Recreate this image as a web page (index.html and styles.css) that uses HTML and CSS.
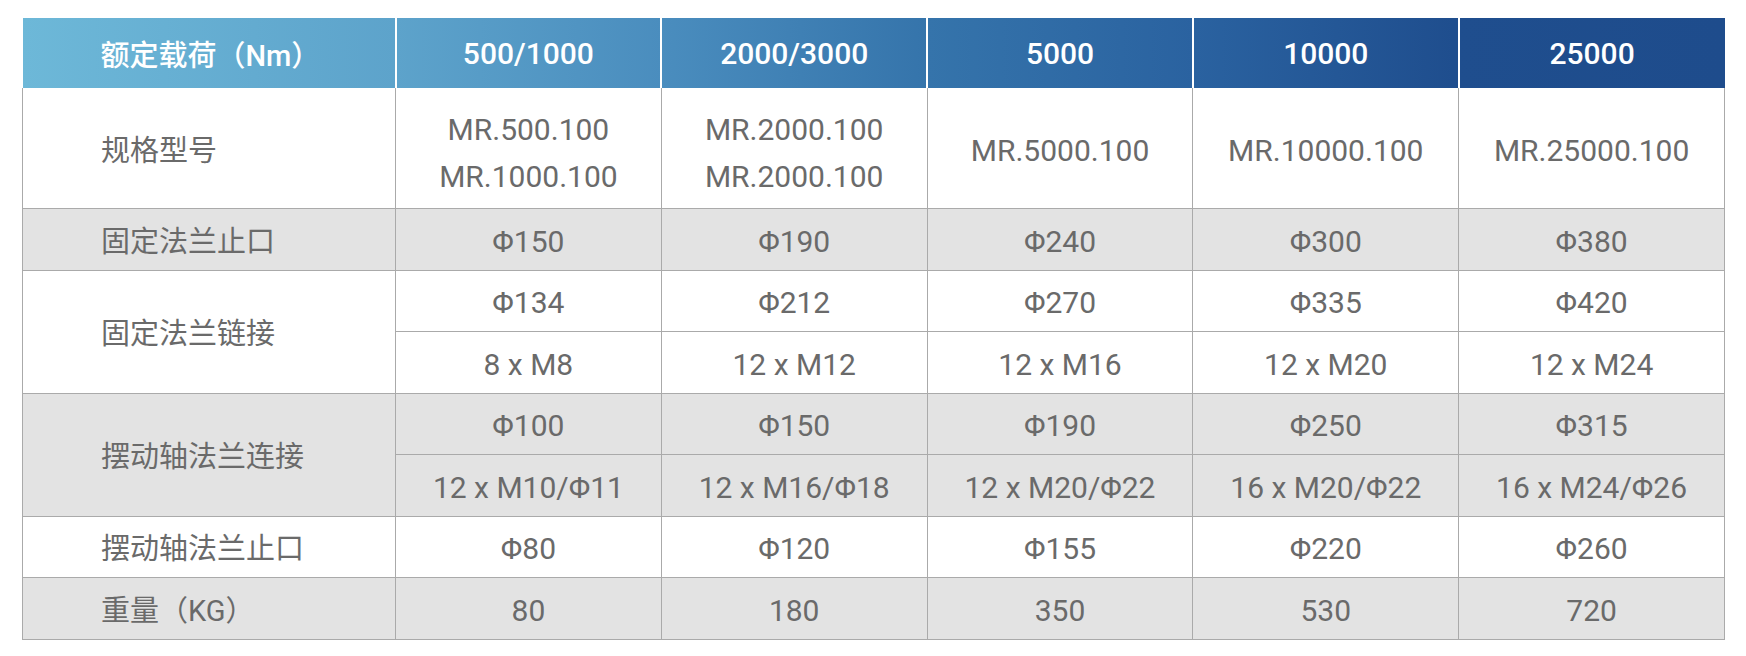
FILE: index.html
```html
<!DOCTYPE html>
<html lang="zh-CN">
<head>
<meta charset="utf-8">
<title>额定载荷规格表</title>
<link rel="stylesheet" href="styles.css">
</head>
<body>
<div class="page">
  <table class="spec">
    <colgroup>
      <col class="c-label">
      <col class="c-val"><col class="c-val"><col class="c-val"><col class="c-val"><col class="c-val">
    </colgroup>
    <thead>
      <tr class="head">
        <th class="label">额定载荷（Nm）</th>
        <th>500/1000</th>
        <th>2000/3000</th>
        <th>5000</th>
        <th>10000</th>
        <th>25000</th>
      </tr>
    </thead>
    <tbody>
      <tr class="white tall">
        <td class="label">规格型号</td>
        <td><div class="two">MR.500.100<br>MR.1000.100</div></td>
        <td><div class="two">MR.2000.100<br>MR.2000.100</div></td>
        <td>MR.5000.100</td>
        <td>MR.10000.100</td>
        <td>MR.25000.100</td>
      </tr>
      <tr class="gray">
        <td class="label">固定法兰止口</td>
        <td>Φ150</td><td>Φ190</td><td>Φ240</td><td>Φ300</td><td>Φ380</td>
      </tr>
      <tr class="white">
        <td class="label" rowspan="2">固定法兰链接</td>
        <td>Φ134</td><td>Φ212</td><td>Φ270</td><td>Φ335</td><td>Φ420</td>
      </tr>
      <tr class="white">
        <td>8 x M8</td><td>12 x M12</td><td>12 x M16</td><td>12 x M20</td><td>12 x M24</td>
      </tr>
      <tr class="gray">
        <td class="label" rowspan="2">摆动轴法兰连接</td>
        <td>Φ100</td><td>Φ150</td><td>Φ190</td><td>Φ250</td><td>Φ315</td>
      </tr>
      <tr class="gray">
        <td>12 x M10/Φ11</td><td>12 x M16/Φ18</td><td>12 x M20/Φ22</td><td>16 x M20/Φ22</td><td>16 x M24/Φ26</td>
      </tr>
      <tr class="white">
        <td class="label">摆动轴法兰止口</td>
        <td>Φ80</td><td>Φ120</td><td>Φ155</td><td>Φ220</td><td>Φ260</td>
      </tr>
      <tr class="gray">
        <td class="label">重量（KG）</td>
        <td>80</td><td>180</td><td>350</td><td>530</td><td>720</td>
      </tr>
    </tbody>
  </table>
</div>
</body>
</html>
```

FILE: styles.css
```css
html, body {
  margin: 0;
  padding: 0;
  background: #ffffff;
}

.page {
  padding: 18px 22px 0 22px;
}

.spec {
  width: 1702px;
  border-collapse: collapse;
  table-layout: fixed;
  font-family: Roboto, "Noto Sans CJK SC", sans-serif;
  font-size: 30px;
  color: #6a6a6a;
  background-image: linear-gradient(to right,
    #6db8d8 0px,
    #5da3cb 373px,
    #4a8dbe 639px,
    #3574ab 905px,
    #2a62a0 1172px,
    #1f4e8e 1430px,
    #1e4c8c 1702px);
  background-size: 1702px 70px;
  background-repeat: no-repeat;
  background-position: 0 0;
}

.c-label { width: 373px; }
.c-val { width: 265.8px; }

.head th {
  height: 70px;
  padding: 0;
  color: #ffffff;
  font-weight: 500;
  text-align: center;
  vertical-align: middle;
  border-left: 2px solid #ffffff;
  background: transparent;
}

.head th:first-child {
  border-left: none;
}

.head th.label {
  text-align: left;
  padding-left: 78px;
  font-size: 29px;
}

tbody td {
  height: 55.5px;
  padding: 5px 0 0 0;
  text-align: center;
  vertical-align: middle;
  border: 1px solid #aaaaaa;
  line-height: 36px;
}

tbody tr:first-child td {
  border-top: none;
}

tbody td.label {
  text-align: left;
  padding-left: 78px;
  font-size: 29px;
}

tr.tall td {
  height: 115px;
}

.two {
  line-height: 47px;
  margin-top: 4px;
}

tr.white td {
  background: #ffffff;
}

tr.gray td {
  background: #e3e3e3;
}
```
